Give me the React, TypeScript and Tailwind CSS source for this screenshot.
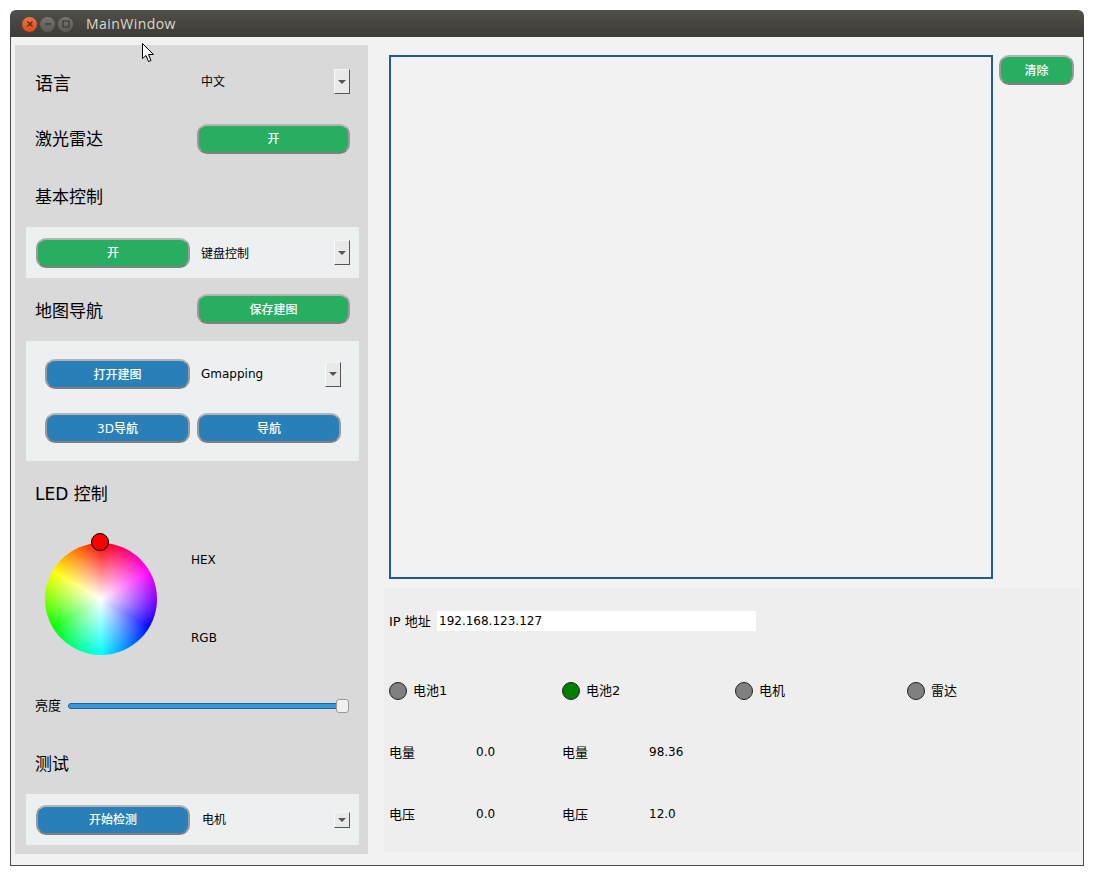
const uiFont = "font-['DejaVu_Sans','Noto_Sans_CJK_SC',sans-serif]";

function PushButton({ label, color, className }: { label: string; color: "green" | "blue"; className: string }) {
  return (
    <div
      className={`flex h-[30px] items-center justify-center rounded-[10px] border-2 border-x-[#9a9a9a] border-t-[#b4b4b4] border-b-[#808080] pt-[1px] text-[12px] font-medium text-white ${
        color === "green" ? "bg-[#27ae60]" : "bg-[#2980b9]"
      } ${className}`}
    >
      {label}
    </div>
  );
}

function ComboArrow({ small }: { small?: boolean }) {
  return (
    <div
      className={`flex w-[16px] items-center justify-center border border-t-[#f4f4f4] border-l-[#fbfbfb] border-r-[#555555] border-b-[#555555] bg-[#e9e9e9] ${
        small ? "h-[16px]" : "h-[25px]"
      }`}
    >
      <div className="h-0 w-0 border-x-[4px] border-t-[4px] border-x-transparent border-t-[#555555]" />
    </div>
  );
}

function Led({ on, label }: { on?: boolean; label: string }) {
  return (
    <div className="flex h-[18px] items-center gap-[6px]">
      <div className={`h-[18px] w-[18px] rounded-full border border-[#222222] ${on ? "bg-[#008000]" : "bg-[#808080]"}`} />
      <span className="text-[13px] leading-[18px]">{label}</span>
    </div>
  );
}

function Stat({ label, value }: { label: string; value: string }) {
  return (
    <div className="flex h-[20px] items-center">
      <span className="w-[87px] translate-y-[1px] text-[13px] leading-[18px]">{label}</span>
      <span>{value}</span>
    </div>
  );
}

function ControlPanel() {
  return (
    <div className="flex h-[809px] w-[353px] flex-col bg-[#d9d9d9] text-[12px] text-black">
      <div className="mt-[24px] flex h-[25px] items-center pl-[20px] pr-[18px]">
        <span className="w-[166px] pt-[3px] text-[18px]">语言</span>
        <span className="flex-1">中文</span>
        <ComboArrow />
      </div>
      <div className="mt-[30px] flex h-[29px] items-center pl-[20px] pr-[18px]">
        <span className="w-[162px] pt-[3px] text-[17px]">激光雷达</span>
        <PushButton label="开" color="green" className="w-[153px]" />
      </div>
      <div className="mt-[32px] flex h-[24px] items-center pl-[20px] pt-[1px] text-[17px]">基本控制</div>
      <div className="ml-[11px] mr-[9px] mt-[18px] flex h-[51px] items-center bg-[#ecf0f1] pl-[10px] pr-[9px]">
        <PushButton label="开" color="green" className="w-[154px]" />
        <span className="flex-1 pl-[11px] pt-[2px]">键盘控制</span>
        <ComboArrow />
      </div>
      <div className="mt-[16px] flex h-[30px] items-center pl-[20px] pr-[18px]">
        <span className="w-[162px] pt-[5px] text-[17px]">地图导航</span>
        <PushButton label="保存建图" color="green" className="w-[153px]" />
      </div>
      <div className="ml-[11px] mr-[9px] mt-[17px] flex h-[120px] flex-col gap-[24px] bg-[#ecf0f1] pl-[19px] pr-[18px] pt-[18px]">
        <div className="flex items-center">
          <PushButton label="打开建图" color="blue" className="w-[145px]" />
          <span className="flex-1 pl-[11px]">Gmapping</span>
          <ComboArrow />
        </div>
        <div className="flex gap-[7px]">
          <PushButton label="3D导航" color="blue" className="w-[145px]" />
          <PushButton label="导航" color="blue" className="w-[144px]" />
        </div>
      </div>
      <div className="mt-[21px] flex h-[24px] items-center pl-[20px] pt-[1px] text-[17px]">LED 控制</div>
      <div className="mt-[37px] flex h-[112px] pl-[30px]">
        <div className="relative h-[112px] w-[112px] rounded-full bg-[conic-gradient(#ff0000,#ff00ff,#0000ff,#00ffff,#00ff00,#ffff00,#ff0000)]">
          <div className="h-full w-full rounded-full bg-[radial-gradient(closest-side,#ffffff,rgba(255,255,255,0))]" />
          <div className="absolute left-[46px] top-[-10px] h-[18px] w-[18px] rounded-full border border-black bg-[#ff0000]" />
        </div>
        <div className="ml-[34px] flex flex-col gap-[60px] pt-[8px]">
          <span className="leading-[18px]">HEX</span>
          <span className="leading-[18px]">RGB</span>
        </div>
      </div>
      <div className="mt-[44px] flex h-[13px] items-center pl-[20px] pr-[19px]">
        <span className="w-[33px] text-[13px]">亮度</span>
        <div className="relative h-[6px] flex-1 rounded-[3px] border border-[#1f6391] bg-[#3498db]">
          <div className="absolute right-[-1px] top-[-5px] h-[14px] w-[13px] rounded-[3px] border border-[#9a9a9a] bg-[#f0f0f0]" />
        </div>
      </div>
      <div className="mt-[40px] flex h-[24px] items-center pl-[20px] pt-[1px] text-[17px]">测试</div>
      <div className="ml-[11px] mr-[9px] mt-[18px] flex h-[51px] items-center bg-[#ecf0f1] pl-[10px] pr-[9px]">
        <PushButton label="开始检测" color="blue" className="w-[154px]" />
        <span className="flex-1 pl-[12px]">电机</span>
        <ComboArrow small />
      </div>
    </div>
  );
}

function StatusPanel() {
  return (
    <div className="mt-[9px] h-[264px] w-[696px] bg-[#eeeeee] pl-[5px] pt-[23px] text-[12px] text-black">
      <div className="flex h-[20px] items-center">
        <span className="w-[48px] translate-y-[1px] text-[13px]">IP 地址</span>
        <div className="flex h-[20px] w-[319px] items-center bg-white pl-[2px]">192.168.123.127</div>
      </div>
      <div className="mt-[51px] grid grid-cols-[173px_173px_172px_173px]">
        <Led label="电池1" />
        <Led on label="电池2" />
        <Led label="电机" />
        <Led label="雷达" />
      </div>
      <div className="mt-[42px] grid w-[346px] grid-cols-2">
        <Stat label="电量" value="0.0" />
        <Stat label="电量" value="98.36" />
      </div>
      <div className="mt-[42px] grid w-[346px] grid-cols-2">
        <Stat label="电压" value="0.0" />
        <Stat label="电压" value="12.0" />
      </div>
    </div>
  );
}

export default function App() {
  return (
    <div className={`relative h-[876px] w-[1094px] overflow-hidden bg-white pl-[10px] pt-[10px] ${uiFont}`}>
      <div className="flex h-[856px] w-[1074px] flex-col">
        {/* Title bar */}
        <div className="flex h-[27px] items-center rounded-t-[6px] bg-gradient-to-b from-[#524f49] to-[#3c3b37] pl-[12px]">
          <div className="mt-[1px] flex items-center gap-[3px]">
            <div className="flex h-[15px] w-[15px] items-center justify-center rounded-full bg-gradient-to-b from-[#f0743f] to-[#d9481a] text-[#5a2a14]">
              <svg width="8" height="8" viewBox="0 0 8 8"><path d="M1.5 1.5 6.5 6.5M6.5 1.5 1.5 6.5" stroke="currentColor" strokeWidth="1.3" /></svg>
            </div>
            <div className="flex h-[15px] w-[15px] items-center justify-center rounded-full bg-gradient-to-b from-[#77756e] to-[#5c5a54] text-[#38362f]">
              <svg width="8" height="8" viewBox="0 0 8 8"><path d="M1 4H7" stroke="currentColor" strokeWidth="1.3" /></svg>
            </div>
            <div className="flex h-[15px] w-[15px] items-center justify-center rounded-full bg-gradient-to-b from-[#77756e] to-[#5c5a54] text-[#38362f]">
              <svg width="8" height="8" viewBox="0 0 8 8"><rect x="1" y="1" width="6" height="6" fill="none" stroke="currentColor" strokeWidth="1.1" /></svg>
            </div>
          </div>
          <span className="ml-[13px] font-['Open_Sans',sans-serif] text-[14px] font-medium tracking-[0.45px] text-[#dcd8cc]">MainWindow</span>
        </div>
        {/* Window body */}
        <div className="flex flex-1 border-x border-b border-[#4b4b4b] bg-[#f2f2f2] pl-[4px] pt-[8px]">
          <ControlPanel />
          <div className="ml-[16px] flex flex-col pt-[10px]">
            <div className="flex items-start gap-[6px] pl-[5px]">
              <div className="h-[524px] w-[604px] border-2 border-[#1f5b98] bg-[#f2f2f2]" />
              <PushButton label="清除" color="green" className="w-[75px]" />
            </div>
            <StatusPanel />
          </div>
        </div>
      </div>
      {/* Mouse pointer */}
      <svg className="absolute left-[141px] top-[42px]" width="15" height="21" viewBox="0 0 15 21">
        <path d="M1.5 1.5V16.5L5 13.5L7.5 19.5L10 18.5L7.5 12.5H12.5Z" fill="#ffffff" stroke="#000000" strokeWidth="1" />
      </svg>
    </div>
  );
}
